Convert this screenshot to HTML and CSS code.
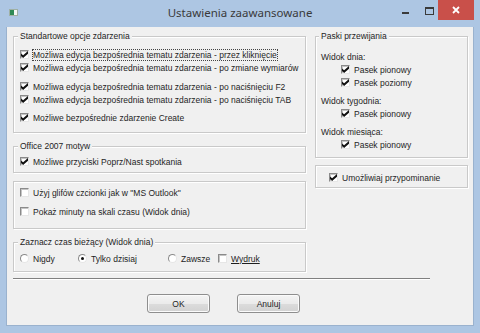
FILE: index.html
```html
<!DOCTYPE html>
<html>
<head>
    <title>Ustawienia zaawansowane</title>
    <link rel="stylesheet" href="styles.css">
</head>
<body>
    <div class="window">
        <div class="titlebar">
            <span class="app-icon"><span class="app-icon-mark"></span></span>
            <span class="title">Ustawienia zaawansowane</span>
            <div class="controls">
                <span class="ctl-min"></span>
                <span class="ctl-max"></span>
                <span class="ctl-close">
                    <svg width="8" height="8" viewBox="0 0 8 8"><path d="M1 1L7 7M7 1L1 7" stroke="#fff" stroke-width="1.8"/></svg>
                </span>
            </div>
        </div>

        <div class="client">
            <div class="columns">
                <div class="col">
                    <fieldset class="group g-std">
                        <legend>Standartowe opcje zdarzenia</legend>
                        <div class="row"><span class="cb on"></span><span class="lbl focus">Możliwa edycja bezpośrednia tematu zdarzenia - przez kliknięcie</span></div>
                        <div class="row"><span class="cb on"></span><span class="lbl">Możliwa edycja bezpośrednia tematu zdarzenia - po zmiane wymiarów</span></div>
                        <div class="row spaced"><span class="cb on"></span><span class="lbl">Możliwa edycja bezpośrednia tematu zdarzenia - po naciśnięciu F2</span></div>
                        <div class="row"><span class="cb on"></span><span class="lbl">Możliwa edycja bezpośrednia tematu zdarzenia - po naciśnięciu TAB</span></div>
                        <div class="row spaced-sm"><span class="cb on"></span><span class="lbl">Możliwe bezpośrednie zdarzenie Create</span></div>
                    </fieldset>

                    <fieldset class="group g-office">
                        <legend>Office 2007 motyw</legend>
                        <div class="row"><span class="cb on"></span><span class="lbl">Możliwe przyciski Poprz/Nast spotkania</span></div>
                    </fieldset>

                    <fieldset class="group g-misc">
                        <div class="row"><span class="cb"></span><span class="lbl">Użyj glifów czcionki jak w "MS Outlook"</span></div>
                        <div class="row spaced"><span class="cb"></span><span class="lbl">Pokaż minuty na skali czasu (Widok dnia)</span></div>
                    </fieldset>

                    <fieldset class="group g-time">
                        <legend>Zaznacz czas bieżący (Widok dnia)</legend>
                        <div class="row">
                            <span class="opt opt-never"><span class="rb"></span><span class="lbl">Nigdy</span></span>
                            <span class="opt opt-today"><span class="rb on"></span><span class="lbl">Tylko dzisiaj</span></span>
                            <span class="opt opt-always"><span class="rb"></span><span class="lbl">Zawsze</span></span>
                            <span class="opt"><span class="cb"></span><span class="lbl link">Wydruk</span></span>
                        </div>
                    </fieldset>
                </div>

                <div class="col">
                    <fieldset class="group g-scroll">
                        <legend>Paski przewijania</legend>
                        <div class="row">Widok dnia:</div>
                        <div class="row sub"><span class="cb on"></span><span class="lbl">Pasek pionowy</span></div>
                        <div class="row sub"><span class="cb on"></span><span class="lbl">Pasek poziomy</span></div>
                        <div class="row spaced-sm">Widok tygodnia:</div>
                        <div class="row sub"><span class="cb on"></span><span class="lbl">Pasek pionowy</span></div>
                        <div class="row spaced-sm">Widok miesiąca:</div>
                        <div class="row sub"><span class="cb on"></span><span class="lbl">Pasek pionowy</span></div>
                    </fieldset>

                    <fieldset class="group g-remind">
                        <div class="row"><span class="cb on"></span><span class="lbl">Umożliwiaj przypominanie</span></div>
                    </fieldset>
                </div>
            </div>

            <div class="separator"></div>

            <div class="buttons">
                <button class="btn">OK</button>
                <button class="btn">Anuluj</button>
            </div>
        </div>
    </div>
</body>
</html>
```

FILE: styles.css
```css
* {
    box-sizing: border-box;
}
body {
    margin: 0;
    font-family: "Liberation Sans", Arial, sans-serif;
    font-size: 8.5px;
    color: #1e1e1e;
}
.window {
    width: 480px;
    height: 333px;
    background: #adc6e3;
}
.titlebar {
    height: 27px;
    display: grid;
    grid-template-columns: 1fr auto 1fr;
}
.app-icon {
    width: 9px;
    height: 7px;
    margin: 9px 0 0 9px;
    background: #f4f7f4;
    border: 1px solid #9fb0a4;
}
.app-icon-mark {
    display: block;
    width: 4px;
    height: 5px;
    background: #2f8a55;
}
.title {
    font-family: "Noto Sans", sans-serif;
    font-size: 11.5px;
    color: #3a3a3a;
    line-height: 26px;
}
.controls {
    justify-self: end;
    display: flex;
    align-items: flex-start;
    margin-right: 6px;
}
.ctl-min {
    width: 7px;
    height: 2px;
    background: #3a3a3a;
    margin: 12px 16px 0 0;
}
.ctl-max {
    width: 9px;
    height: 8px;
    border: 1px solid #3a3a3a;
    border-top-width: 2px;
    margin: 7px 4px 0 0;
}
.ctl-close {
    width: 36px;
    height: 20px;
    background: #c9504a;
    display: flex;
    align-items: center;
    justify-content: center;
}
.client {
    margin: 0 6px;
    height: 299px;
    background: #f0f0f0;
    border: 1px solid #9ab2ce;
    border-top: none;
    padding: 3px 0 0 6px;
}
.columns {
    display: grid;
    grid-template-columns: 293px 153px;
    column-gap: 9px;
    align-items: start;
}
.group {
    margin: 0;
    min-width: 0;
    border: 1px solid #c9c9c9;
    box-shadow: inset 1px 1px 0 #fff, 1px 1px 0 #fff;
}
.group legend {
    padding: 0 2px;
    margin-left: -2px;
    line-height: 12px;
    background: #f0f0f0;
}
.g-std {
    padding: 6px 6px 8px;
}
.g-office {
    margin-top: 7px;
    padding: 3px 6px 4px;
}
.g-misc {
    margin-top: 8px;
    padding: 4px 6px 10px;
}
.g-time {
    margin-top: 7px;
    padding: 4px 6px 6px;
}
.g-scroll {
    padding: 8px 5px 6px;
}
.g-remind {
    margin-top: 7px;
    padding: 5px 13px 3px;
}
.row {
    height: 13px;
    display: flex;
    align-items: center;
    gap: 4px;
    white-space: nowrap;
}
.row.spaced {
    margin-top: 6px;
}
.row.spaced-sm {
    margin-top: 5px;
}
.row.sub {
    padding-left: 20px;
}
.lbl.focus {
    outline: 1px dotted #444;
    outline-offset: 0;
}
.lbl.link {
    text-decoration: underline;
}
.cb {
    position: relative;
    flex: none;
    width: 9px;
    height: 9px;
    background: #fff;
    border: 1px solid;
    border-color: #8a8a8a #e6e6e6 #e6e6e6 #8a8a8a;
    box-shadow: inset 1px 1px 0 #c4c4c4;
}
.cb.on::after {
    content: "";
    position: absolute;
    left: 0;
    top: 0;
    width: 7px;
    height: 7px;
    background: #111;
    clip-path: polygon(0 35%, 30% 62%, 100% 0, 100% 38%, 30% 100%, 0 72%);
}
.opt {
    display: flex;
    align-items: center;
    gap: 4px;
}
.opt-never {
    width: 54px;
}
.opt-today {
    width: 86px;
}
.opt-always {
    width: 46px;
}
.rb {
    position: relative;
    flex: none;
    width: 9px;
    height: 9px;
    border-radius: 50%;
    background: #fff;
    border: 1px solid;
    border-color: #8a8a8a #e6e6e6 #e6e6e6 #8a8a8a;
}
.rb.on::after {
    content: "";
    position: absolute;
    left: 2px;
    top: 2px;
    width: 3px;
    height: 3px;
    border-radius: 50%;
    background: #111;
}
.separator {
    width: 417px;
    margin-top: 6px;
    border-top: 1px solid #808080;
    border-bottom: 1px solid #fff;
}
.buttons {
    display: flex;
    gap: 27px;
    margin: 14px 0 0 134px;
}
.btn {
    width: 63px;
    height: 19px;
    padding: 0;
    font-family: "Liberation Sans", Arial, sans-serif;
    font-size: 8.5px;
    color: #1e1e1e;
    border: 1px solid #8e8e8e;
    border-radius: 3px;
    background: linear-gradient(#f4f4f4, #ebebeb 50%, #dcdcdc 51%, #d2d2d2);
    box-shadow: inset 0 0 0 1px #fbfbfb;
}
```
